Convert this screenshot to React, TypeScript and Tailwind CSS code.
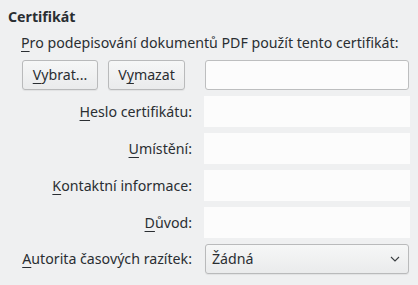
import React from 'react';

const labelClass = 'flex items-center justify-end pr-[12px] whitespace-nowrap';
const fieldClass = 'h-[31px] w-[206px] bg-[#fcfcfc]';
const buttonClass =
  'flex h-[30px] items-center justify-center rounded-[3px] border border-[#b9babb] bg-gradient-to-b from-[#f6f7f7] to-[#eaebec] shadow-[0_1px_1px_rgba(0,0,0,0.06)]';

function Mn({ children }: { children: React.ReactNode }) {
  return <span className="underline decoration-[1px] underline-offset-[3px]">{children}</span>;
}

export default function App() {
  return (
    <div className="h-[285px] w-[418px] overflow-hidden bg-[#eff0f1] font-['Noto_Sans',sans-serif] text-[14.2px] leading-[20px] text-[#2a2e32]">
      <div className="pl-[8px] pt-[7px] font-bold">Certifikát</div>
      <div className="mt-[6px] pl-[21px] whitespace-nowrap">
        <Mn>P</Mn>ro podepisování dokumentů PDF použít tento certifikát:
      </div>

      <div className="mt-[7px] grid grid-cols-[204px_206px] gap-y-[6px]">
        <div className="flex items-center gap-[10px] pl-[22px]">
          <button type="button" className={`${buttonClass} w-[76px]`}>
            <Mn>V</Mn>ybrat...
          </button>
          <button type="button" className={`${buttonClass} w-[77px]`}>
            V<Mn>y</Mn>mazat
          </button>
        </div>
        <div className="pl-[1px]">
          <div className="h-[30px] w-[204px] rounded-[3px] border border-[#bdbebf] bg-[#fcfcfc]" />
        </div>

        <div className={labelClass}>
          <span>
            <Mn>H</Mn>eslo certifikátu:
          </span>
        </div>
        <div className={fieldClass} />

        <div className={labelClass}>
          <span>
            <Mn>U</Mn>místění:
          </span>
        </div>
        <div className={fieldClass} />

        <div className={labelClass}>
          <span>
            <Mn>K</Mn>ontaktní informace:
          </span>
        </div>
        <div className={fieldClass} />

        <div className={labelClass}>
          <span>
            <Mn>D</Mn>ůvod:
          </span>
        </div>
        <div className={fieldClass} />

        <div className={labelClass}>
          <span>
            <Mn>A</Mn>utorita časových razítek:
          </span>
        </div>
        <div className="pl-[1px]">
          <div className="flex h-[30px] w-[204px] items-center justify-between rounded-[3px] border border-[#b9babb] bg-gradient-to-b from-[#f6f7f7] to-[#eaebec] pl-[6px] pr-[8px] shadow-[0_1px_1px_rgba(0,0,0,0.06)]">
            <span>Žádná</span>
            <svg width="10" height="6" viewBox="0 0 10 6" fill="none">
              <path d="M1 1l4 4 4-4" stroke="#3b3f43" strokeWidth="1.1" />
            </svg>
          </div>
        </div>
      </div>
    </div>
  );
}
